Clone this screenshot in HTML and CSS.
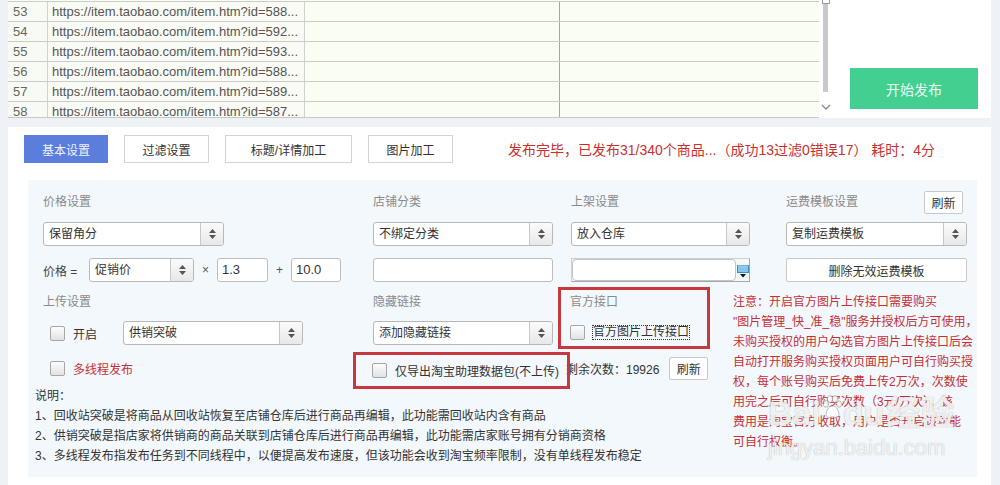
FILE: index.html
```html
<!DOCTYPE html>
<html lang="zh-CN">
<head>
<meta charset="utf-8">
<title>发布设置</title>
<link rel="stylesheet" href="styles.css">
</head>
<body>
<div class="page">
  <section class="top-panel">
    <div class="data-table">
      <div class="row"><div class="c num">53</div><div class="c url">https://item.taobao.com/item.htm?id=588...</div><div class="c c3"></div><div class="c c4"></div></div>
      <div class="row"><div class="c num">54</div><div class="c url">https://item.taobao.com/item.htm?id=592...</div><div class="c c3"></div><div class="c c4"></div></div>
      <div class="row"><div class="c num">55</div><div class="c url">https://item.taobao.com/item.htm?id=593...</div><div class="c c3"></div><div class="c c4"></div></div>
      <div class="row"><div class="c num">56</div><div class="c url">https://item.taobao.com/item.htm?id=588...</div><div class="c c3"></div><div class="c c4"></div></div>
      <div class="row"><div class="c num">57</div><div class="c url">https://item.taobao.com/item.htm?id=589...</div><div class="c c3"></div><div class="c c4"></div></div>
      <div class="row"><div class="c num">58</div><div class="c url">https://item.taobao.com/item.htm?id=587...</div><div class="c c3"></div><div class="c c4"></div></div>
    </div>
    <div class="vscroll">
      <span class="thumb-cap"></span>
      <span class="thumb"></span>
      <svg class="chev" width="10" height="7" viewBox="0 0 10 7"><path d="M1 1 L5 5 L9 1" fill="none" stroke="#8a8a8a" stroke-width="1.3"/></svg>
    </div>
    <div class="publish-wrap"><button class="publish">开始发布</button></div>
  </section>

  <section class="main-panel">
    <div class="tabbar">
      <button class="tab active w84">基本设置</button>
      <button class="tab w85">过滤设置</button>
      <button class="tab w127">标题/详情加工</button>
      <button class="tab w85">图片加工</button>
      <span class="status">发布完毕，已发布31/340个商品...（成功13过滤0错误17） 耗时：4分</span>
    </div>

    <div class="settings">
      <div class="top-grid">
        <div class="label">价格设置</div>
        <div class="label">店铺分类</div>
        <div class="label">上架设置</div>
        <div class="label-row"><span class="label">运费模板设置</span><button class="btn refresh">刷新</button></div>

        <div class="select w181"><span class="sv">保留角分</span><span class="sa"><svg width="7" height="10" viewBox="0 0 7 10"><path d="M3.5 0 L7 4 H0 Z M0 6 H7 L3.5 10 Z" fill="#555"/></svg></span></div>
        <div class="select w180"><span class="sv">不绑定分类</span><span class="sa"><svg width="7" height="10" viewBox="0 0 7 10"><path d="M3.5 0 L7 4 H0 Z M0 6 H7 L3.5 10 Z" fill="#555"/></svg></span></div>
        <div class="select w179"><span class="sv">放入仓库</span><span class="sa"><svg width="7" height="10" viewBox="0 0 7 10"><path d="M3.5 0 L7 4 H0 Z M0 6 H7 L3.5 10 Z" fill="#555"/></svg></span></div>
        <div class="select w181"><span class="sv">复制运费模板</span><span class="sa"><svg width="7" height="10" viewBox="0 0 7 10"><path d="M3.5 0 L7 4 H0 Z M0 6 H7 L3.5 10 Z" fill="#555"/></svg></span></div>

        <div class="price-row r3">
          <span class="pl">价格 =</span>
          <div class="select w105"><span class="sv">促销价</span><span class="sa"><svg width="7" height="10" viewBox="0 0 7 10"><path d="M3.5 0 L7 4 H0 Z M0 6 H7 L3.5 10 Z" fill="#555"/></svg></span></div>
          <span class="op">×</span>
          <div class="input w51">1.3</div>
          <span class="op">+</span>
          <div class="input w50">10.0</div>
        </div>
        <div class="input w180 r3"></div>
        <div class="date r3">
          <div class="date-field"></div>
          <svg class="cal" width="12" height="13" viewBox="0 0 12 13"><rect x="0" y="0" width="12" height="8" fill="#3b8dcf"/><rect x="1" y="2" width="10" height="5" fill="#86c6ee"/><rect x="1" y="0.6" width="10" height="1" fill="#d7ecfa"/><path d="M3 9 H9 L6 12.5 Z" fill="#111"/></svg>
        </div>
        <button class="btn w181 r3">删除无效运费模板</button>
      </div>

      <div class="lower">
        <div class="lower-left">
          <div class="lower-cols">
            <div class="colA">
              <div class="label sub">上传设置</div>
              <div class="line open-row">
                <span class="cb"></span><span class="ctext">开启</span>
                <div class="select w180 sup"><span class="sv">供销突破</span><span class="sa"><svg width="7" height="10" viewBox="0 0 7 10"><path d="M3.5 0 L7 4 H0 Z M0 6 H7 L3.5 10 Z" fill="#555"/></svg></span></div>
              </div>
              <div class="line multi-row"><span class="cb"></span><span class="ctext red">多线程发布</span></div>
            </div>
            <div class="colB">
              <div class="label sub indent">隐藏链接</div>
              <div class="select w180 hide-sel"><span class="sv">添加隐藏链接</span><span class="sa"><svg width="7" height="10" viewBox="0 0 7 10"><path d="M3.5 0 L7 4 H0 Z M0 6 H7 L3.5 10 Z" fill="#555"/></svg></span></div>
              <div class="redbox export-box"><span class="cb"></span><span class="ctext">仅导出淘宝助理数据包(不上传)</span></div>
            </div>
            <div class="colC">
              <div class="redbox api-box">
                <div class="label api-label">官方接口</div>
                <div class="line api-row"><span class="cb"></span><span class="dotted">官方图片上传接口</span></div>
              </div>
              <div class="remain-row"><span class="remain">剩余次数：19926</span><button class="btn small">刷新</button></div>
            </div>
          </div>
          <div class="notes">
            <div>说明：</div>
            <div>1、回收站突破是将商品从回收站恢复至店铺仓库后进行商品再编辑，此功能需回收站内含有商品</div>
            <div>2、供销突破是指店家将供销商的商品关联到店铺仓库后进行商品再编辑，此功能需店家账号拥有分销商资格</div>
            <div>3、多线程发布指发布任务到不同线程中，以便提高发布速度，但该功能会收到淘宝频率限制，没有单线程发布稳定</div>
          </div>
        </div>
        <div class="warn">注意：开启官方图片上传接口需要购买<br>"图片管理_快_准_稳"服务并授权后方可使用，<br>未购买授权的用户勾选官方图片上传接口后会<br>自动打开服务购买授权页面用户可自行购买授<br>权，每个账号购买后免费上传2万次，次数使<br>用完之后可自行购买次数（3元/万次），该<br>费用是淘宝官方收取，用户是否开启该功能<br>可自行权衡。</div>
      </div>
    </div>

    <div class="wm">
      <div class="wm1">Bai<svg class="paw" width="20" height="24" viewBox="0 0 20 24"><g fill="rgba(255,255,255,0.85)" stroke="rgba(80,80,80,0.35)" stroke-width="1"><ellipse cx="4" cy="9" rx="2.6" ry="3.4"/><ellipse cx="8" cy="4" rx="2.6" ry="3.4"/><ellipse cx="13" cy="4" rx="2.6" ry="3.4"/><ellipse cx="17" cy="9" rx="2.4" ry="3.2"/><path d="M4 19 C5 13 8 11 10.5 11 C13 11 16 13 17 19 C17.5 22 14 23 10.5 22 C7 23 3.5 22 4 19 Z"/></g></svg>du<span class="wm-cn">经验</span></div>
      <div class="wm2">jingyan.baidu.com</div>
    </div>
  </section>
</div>
</body>
</html>
```

FILE: styles.css
```css
* { box-sizing: border-box; }
html, body { margin: 0; padding: 0; }
body {
  width: 1000px;
  height: 485px;
  overflow: hidden;
  background: #eef2f6;
  font-family: "Liberation Sans", "Noto Sans CJK SC", sans-serif;
  font-size: 12px;
  color: #333;
}
button { font-family: "Liberation Sans", "Noto Sans CJK SC", sans-serif; padding: 0; cursor: default; }

.page { padding-left: 8px; width: 991px; }

/* ---------- top panel ---------- */
.top-panel { display: flex; height: 118px; background: #fff; }
.data-table {
  width: 811px;
  height: 118px;
  overflow: hidden;
  padding-top: 1px;
  border-bottom: 1px solid #c6cac7;
  background: #fafdf1;
}
.row { display: flex; height: 20px; border-top: 1px solid #c9cdca; background: #fafdf1; }
.c { height: 19px; line-height: 19px; font-size: 13px; white-space: nowrap; overflow: hidden; }
.num { width: 40px; padding-left: 5px; color: #666; border-right: 1px solid #cdd5cd; background: #f8fbf3; }
.url { width: 257px; padding-left: 4px; color: #555; border-right: 1px solid #cfd2cf; background: #f9fbf4; }
.c3 { width: 255px; border-right: 1px solid #a4a6a4; }
.c4 { flex: 1; }

.vscroll { width: 13px; display: flex; flex-direction: column; align-items: center; }
.thumb-cap { width: 8px; height: 4px; border: 1px solid #9a9a9a; border-top: none; background: #fff; }
.thumb { width: 5px; height: 88px; background: #c9c9c9; }
.chev { margin-top: 12px; }

.publish-wrap { flex: 1; display: flex; align-items: flex-end; justify-content: flex-end; padding: 0 13px 9px 0; }
.publish {
  width: 128px; height: 41px;
  background: #42cf8f; color: #e9fff4;
  border: none; font-size: 14px;
}

/* ---------- main panel ---------- */
.main-panel {
  position: relative;
  margin-top: 9px;
  height: 362px;
  background: #fff;
  padding: 8px 14px 0 16px;
}
.tabbar { display: flex; align-items: center; height: 28px; gap: 16px; }
.tab {
  height: 28px;
  border: 1px solid #d3d3d3;
  background: #fff;
  color: #333;
  font-size: 12px;
}
.tab.active { background: #5b7ddb; border-color: #5b7ddb; color: #eef2ff; }
.w84 { width: 84px; }
.w85 { width: 85px; }
.w127 { width: 127px; }
.status { margin-left: 39px; font-size: 14px; color: #c9302c; white-space: nowrap; }

.settings {
  margin-top: 17px;
  margin-left: 4px;
  width: 949px;
  height: 297px;
  background: #f3f8fc;
  padding: 10px 0 0 15px;
}

.top-grid {
  display: grid;
  grid-template-columns: 330px 198px 215px 181px;
  grid-template-rows: 24px 24px 28px;
  row-gap: 8px;
  align-items: start;
}
.r3 { align-self: end; }
.label { color: #8a8a8a; line-height: 24px; white-space: nowrap; }
.label-row { display: flex; justify-content: space-between; align-items: center; padding-right: 4px; }

.select {
  display: flex;
  height: 24px;
  border: 1px solid #b8b8b8;
  border-radius: 3px;
  background: #fff;
  overflow: hidden;
}
.sv { flex: 1; padding-left: 5px; line-height: 22px; color: #333; white-space: nowrap; }
.sa {
  width: 23px;
  border-left: 1px solid #c8c8c8;
  background: linear-gradient(#fbfbfb, #e8e8e8);
  display: flex; align-items: center; justify-content: center;
}
.w181 { width: 181px; }
.w180 { width: 180px; }
.w179 { width: 179px; }
.w105 { width: 105px; }
.w51 { width: 51px; }
.w50 { width: 50px; }

.input {
  height: 24px;
  border: 1px solid #bdbdbd;
  border-radius: 3px;
  background: #fff;
  padding-left: 4px;
  line-height: 22px;
  font-size: 13px;
  color: #333;
}
.price-row { display: flex; align-items: center; height: 24px; }
.pl { width: 46px; color: #444; white-space: nowrap; }
.op { width: 23px; text-align: center; color: #555; }

.date {
  width: 179px; height: 24px;
  border: 1px solid #a8a8a8;
  border-left-color: #d0d0d0;
  border-top-color: #d0d0d0;
  display: flex; align-items: center;
}
.date-field { width: 164px; height: 22px; border: 1px solid #c4c4c4; border-radius: 4px; background: #fff; }
.cal { margin-left: 1px; margin-top: 2px; }

.btn {
  height: 24px;
  border: 1px solid #c9c9c9;
  border-radius: 2px;
  background: #fff;
  color: #333;
  font-size: 12px;
}
.refresh { width: 39px; height: 23px; }
.small { width: 39px; height: 23px; margin-left: 10px; }

/* ---------- lower section ---------- */
.lower { display: flex; margin-top: 5px; }
.lower-left { width: 690px; }
.lower-cols { display: flex; }
.colA { width: 310px; }
.colB { width: 217px; }
.colC { width: 163px; }

.label.sub { margin-top: 7px; line-height: 16px; }
.indent { padding-left: 20px; }
.line { display: flex; align-items: center; height: 24px; }
.open-row { margin-top: 11px; padding-left: 7px; }
.multi-row { margin-top: 11px; padding-left: 7px; }
.cb {
  width: 15px; height: 15px; flex: none;
  border: 1px solid #a6a6a6;
  border-radius: 2px;
  background: linear-gradient(#fdfdfd, #e2e2e2);
}
.ctext { margin-left: 8px; color: #333; white-space: nowrap; }
.red { color: #c62f34; }
.sup { margin-left: 26px; }
.hide-sel { margin-top: 11px; margin-left: 20px; }

.redbox { border: 3px solid #c6383d; }
.export-box {
  position: relative; z-index: 1;
  margin-top: 7px;
  width: 217px; height: 37px;
  display: flex; align-items: center;
  padding-left: 16px;
}
.export-box .ctext { margin-left: 8px; }
.api-box {
  margin-left: -12px;
  width: 152px; height: 62px;
  padding-left: 9px;
}
.api-label { margin-top: 4px; line-height: 16px; }
.api-row { margin-top: 10px; }
.dotted { margin-left: 7px; border: 1px dotted #333; line-height: 13px; padding: 0; white-space: nowrap; }
.remain-row { display: flex; align-items: center; margin-top: 8px; margin-left: -4px; height: 23px; }
.remain { color: #333; white-space: nowrap; }

.notes { margin-left: -8px; margin-top: -3px; line-height: 20px; color: #333; white-space: nowrap; }

.warn {
  margin-top: 5px;
  color: #c62f34;
  line-height: 20px;
  white-space: nowrap;
}

/* ---------- watermark overlay ---------- */
.wm { position: absolute; left: 760px; top: 266px; pointer-events: none; }
.wm1 {
  display: flex; align-items: flex-end;
  font-family: "Liberation Sans", "Noto Sans CJK SC", sans-serif;
  font-weight: bold; font-size: 34px; line-height: 40px;
  color: rgba(255,255,255,0.85);
  text-shadow: 0 0 1px rgba(60,60,60,0.45);
}
.paw { margin: 0 1px 14px 1px; }
.wm-cn { margin-left: 2px; }
.wm2 {
  margin-top: 2px;
  font-size: 22px; line-height: 26px;
  color: rgba(255,255,255,0.85);
  text-shadow: 0 0 1px rgba(60,60,60,0.45);
}
```
